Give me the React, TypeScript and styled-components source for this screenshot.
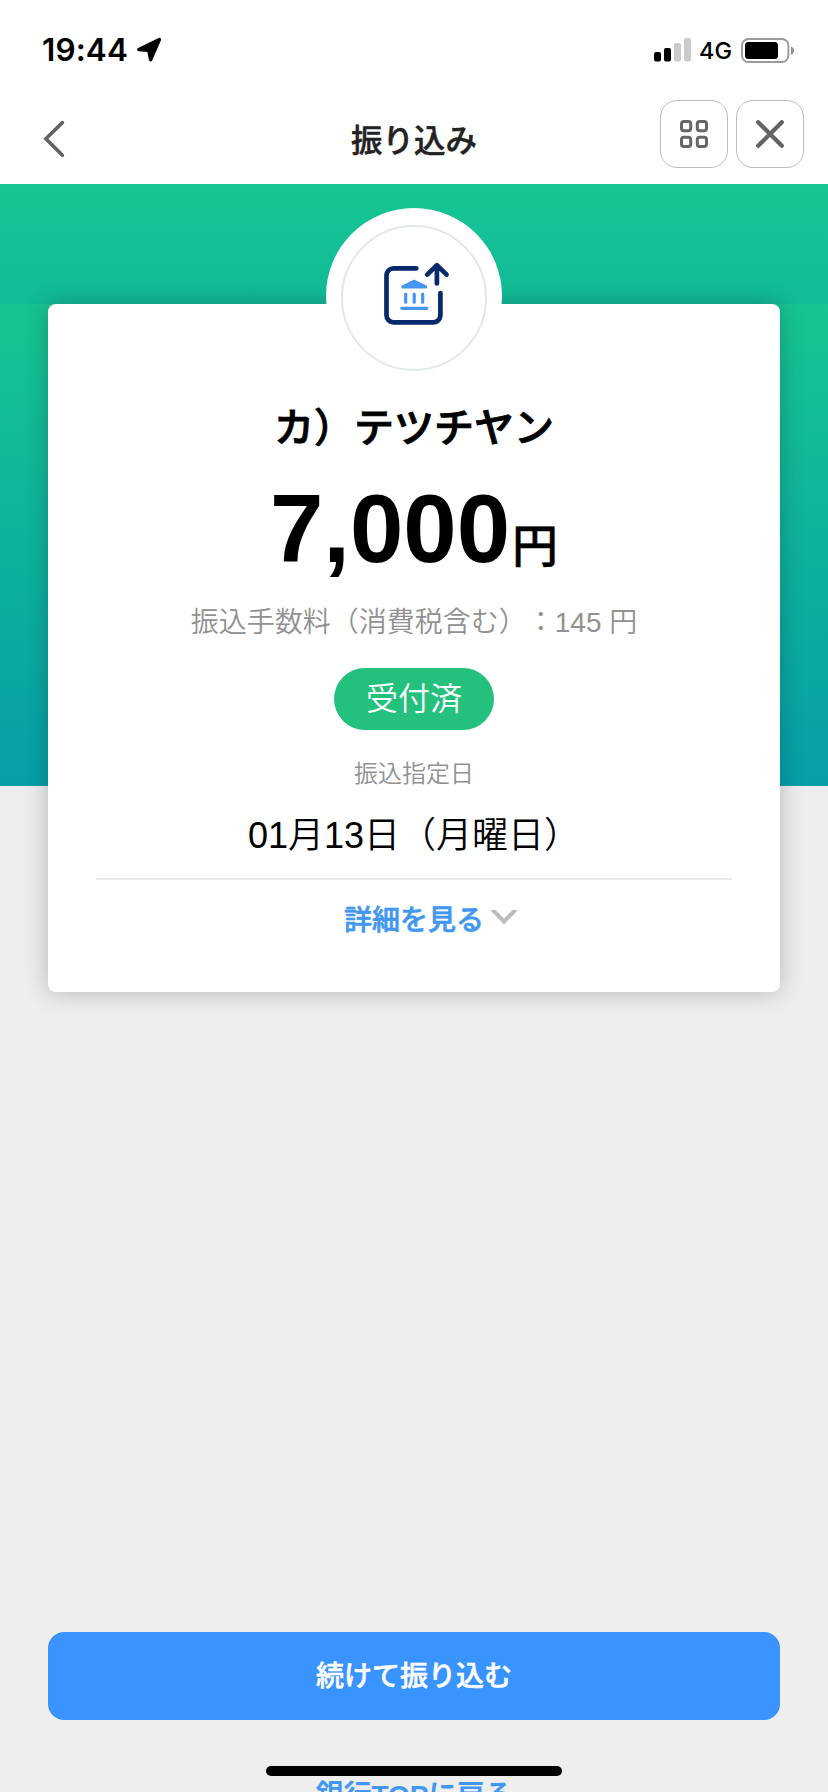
import React from "react";
import styled, { createGlobalStyle } from "styled-components";

const GlobalStyle = createGlobalStyle`
  *, *::before, *::after { box-sizing: border-box; }
  body {
    margin: 0;
    background: #eeeeee;
    font-family: "Liberation Sans", "Noto Sans CJK JP", sans-serif;
    text-spacing-trim: space-all;
    color: #000;
  }
  p, h1, h2 { margin: 0; }
  button { font-family: inherit; cursor: pointer; }
  svg { display: block; }
`;

const Screen = styled.div`
  width: 828px;
  height: 1792px;
  margin: 0 auto;
  display: flex;
  flex-direction: column;
  overflow: hidden;
  background: #eeeeee;
`;

const StatusBar = styled.div`
  flex: none;
  display: flex;
  justify-content: space-between;
  align-items: flex-start;
  height: 94px;
  padding: 34px 34px 0 42px;
  background: #fff;
  font-family: "Inter", sans-serif;
`;

const StatusGroup = styled.div`
  display: flex;
  align-items: center;
  height: 32px;
`;

const Clock = styled.span`
  width: 86px;
  margin-right: 8px;
  font-size: 31.5px;
  font-weight: 600;
  letter-spacing: 0.1px;
  line-height: 32px;
  white-space: nowrap;
`;

const Network = styled.span`
  width: 33px;
  margin: 1px 9px 0 8px;
  font-size: 23.5px;
  font-weight: 500;
  line-height: 32px;
`;

const NavBar = styled.header`
  flex: none;
  display: grid;
  grid-template-columns: 144px 1fr 144px;
  height: 90px;
  padding: 6px 24px 0;
  background: #fff;
`;

const BackButton = styled.button`
  width: 60px;
  height: 68px;
  padding: 10px 0 0 19px;
  border: 0;
  background: none;
`;

const PageTitle = styled.h1`
  text-align: center;
  font-size: 31.5px;
  font-weight: 500;
  line-height: 82px;
  color: #222;
  -webkit-text-stroke: 0.5px currentColor;
`;

const NavActions = styled.div`
  display: flex;
  gap: 8px;
`;

const SquareButton = styled.button`
  display: grid;
  place-items: center;
  width: 68px;
  height: 68px;
  padding: 0;
  border: 1px solid #bdbdbd;
  border-radius: 17px;
  background: #fff;
`;

const HeroBand = styled.div`
  flex: none;
  height: 120px;
  background: linear-gradient(#17c593, #11bb97);
`;

const Main = styled.main`
  flex: none;
  height: 1328px;
  padding: 0 48px;
  background: linear-gradient(#16c591, #069fa7) top / 100% 482px no-repeat;
`;

const Card = styled.section`
  display: flex;
  flex-direction: column;
  align-items: center;
  height: 688px;
  border-radius: 8px;
  background: #fff;
  box-shadow: 0 0 24px rgba(0, 0, 0, 0.24);
`;

const Medallion = styled.div`
  flex: none;
  display: grid;
  place-items: center;
  width: 176px;
  height: 176px;
  margin-top: -96px;
  padding-top: 4px;
  border-radius: 50%;
  background: #fff;
`;

const Ring = styled.div`
  display: grid;
  place-items: center;
  width: 146px;
  height: 146px;
  border: 2px solid #e2e8ea;
  border-radius: 50%;
`;

const Recipient = styled.h2`
  margin-top: 14px;
  font-size: 40px;
  font-weight: 500;
  line-height: 60px;
  -webkit-text-stroke: 0.9px currentColor;
`;

const Amount = styled.p`
  height: 110px;
  margin-top: 16px;
  font-size: 96px;
  font-weight: 700;
  line-height: 110px;
`;

const Unit = styled.span`
  margin-left: 2px;
  font-size: 46px;
  font-weight: 500;
  line-height: 1;
  -webkit-text-stroke: 0.4px currentColor;
`;

const Note = styled.p<{ $size: number; $height: number; $gap: number; $color?: string }>`
  margin-top: ${(p) => p.$gap}px;
  font-size: ${(p) => p.$size}px;
  font-weight: 350;
  line-height: ${(p) => p.$height}px;
  color: ${(p) => p.$color ?? "#919191"};
  white-space: nowrap;
`;

const Badge = styled.span`
  width: 160px;
  height: 62px;
  margin-top: 25px;
  border-radius: 31px;
  background: #24c07d;
  color: #fff;
  text-align: center;
  font-size: 32px;
  font-weight: 350;
  line-height: 63px;
`;

const Divider = styled.hr`
  width: 636px;
  height: 2px;
  margin: 17px 0 0;
  border: 0;
  background: #e9ebec;
`;

const DetailButton = styled.button`
  display: flex;
  align-items: center;
  gap: 6px;
  height: 40px;
  margin-top: 21px;
  padding: 0 0 0 34px;
  border: 0;
  background: none;
  color: #4297f2;
  font-size: 28px;
  font-weight: 500;
  line-height: 40px;
  -webkit-text-stroke: 0.6px currentColor;
`;

const Footer = styled.footer`
  position: relative;
  flex: none;
  height: 160px;
  padding: 0 48px;
`;

const PrimaryButton = styled.button`
  display: block;
  width: 100%;
  height: 88px;
  padding: 0;
  border: 0;
  border-radius: 16px;
  background: #3994ff;
  color: #fff;
  font-size: 28px;
  font-weight: 500;
  line-height: 89px;
  -webkit-text-stroke: 0.5px currentColor;
`;

const TextLink = styled.a`
  display: block;
  margin-top: 56px;
  text-align: center;
  font-size: 28px;
  font-weight: 600;
  line-height: 40px;
  color: #4297f2;
`;

const HomeIndicator = styled.div`
  position: absolute;
  top: 134px;
  left: 266px;
  width: 296px;
  height: 10px;
  border-radius: 5px;
  background: #000;
`;

const LocationIcon = () => (
  <svg width="26" height="26" viewBox="0 0 26 26">
    <path
      d="M23.4 2.6 14.6 22.8 13 14.2 12 13.3 2.8 12.6Z"
      fill="#000"
      stroke="#000"
      strokeWidth="3.4"
      strokeLinejoin="round"
    />
  </svg>
);

const SignalIcon = () => (
  <svg width="37" height="24" viewBox="0 0 37 24">
    <rect x="0" y="14" width="7" height="9.4" rx="2" />
    <rect x="10" y="10" width="7" height="13.4" rx="2" />
    <rect x="20" y="5" width="7" height="18.4" rx="2" fill="#cbcbcb" />
    <rect x="30" y="0" width="7" height="23.4" rx="2" fill="#cbcbcb" />
  </svg>
);

const BatteryIcon = () => (
  <svg width="53" height="25" viewBox="0 0 53 25">
    <rect x="1" y="1" width="46.4" height="23" rx="6.5" fill="none" stroke="#9a9a9a" strokeWidth="1.9" />
    <rect x="4" y="4" width="33" height="17" rx="3.5" />
    <path d="M50 8.5v8.2c2-.7 3-2.2 3-4.1s-1-3.4-3-4.1Z" fill="#8f8f8f" />
  </svg>
);

const BackIcon = () => (
  <svg width="22" height="38" viewBox="0 0 22 38" fill="none" stroke="#636363" strokeWidth="3.6" strokeLinecap="round">
    <path d="M19.4 2.6 2.9 18.8l16.5 16.4" />
  </svg>
);

const GridIcon = () => (
  <svg width="28" height="28" viewBox="0 0 28 28" fill="none" stroke="#666" strokeWidth="3">
    <rect x="1.5" y="1.5" width="9.2" height="9.2" rx="2.4" />
    <rect x="17.3" y="1.5" width="9.2" height="9.2" rx="2.4" />
    <rect x="1.5" y="17.3" width="9.2" height="9.2" rx="2.4" />
    <rect x="17.3" y="17.3" width="9.2" height="9.2" rx="2.4" />
  </svg>
);

const CloseIcon = () => (
  <svg width="28" height="28" viewBox="0 0 28 28" fill="none" stroke="#636363" strokeWidth="4.2" strokeLinecap="round">
    <path d="M2.2 2.2l23.6 23.6M25.8 2.2 2.2 25.8" />
  </svg>
);

const BankTransferIcon = () => (
  <svg width="72" height="72" viewBox="378 262 72 72" fill="none" strokeLinecap="round" strokeLinejoin="round">
    <g stroke="#06296b" strokeWidth="4.7">
      <path d="M416.3 268.4H393.5a7 7 0 0 0-7 7V315.3a7 7 0 0 0 7 7H433.4a7 7 0 0 0 7-7V293" />
      <path d="M436.9 283.4V265.6M427.2 274.6l9.7-9.3 9.7 9.3" />
    </g>
    <path d="M414.2 280.7 426 286.6v.9H402.4v-.9Z" fill="#4596f2" stroke="#4596f2" strokeWidth="2.2" />
    <g stroke="#4596f2" strokeWidth="3.2">
      <path d="M405.7 294v8.2M414.2 294v8.2M422.7 294v8.2" />
      <path d="M401.9 308.3h24.7" />
    </g>
  </svg>
);

const ChevronDown = () => (
  <svg width="28" height="15" viewBox="0 0 28 15">
    <path d="M0 0h5.6L14 8.6 22.4 0H28L14 14.6Z" fill="#bcbcbc" />
  </svg>
);

const ChevronSlot = styled.span`
  display: block;
  margin-top: -7px;
`;

export default function App() {
  return (
    <>
      <GlobalStyle />
      <Screen>
        <StatusBar>
          <StatusGroup>
            <Clock>19:44</Clock>
            <LocationIcon />
          </StatusGroup>
          <StatusGroup>
            <SignalIcon />
            <Network>4G</Network>
            <BatteryIcon />
          </StatusGroup>
        </StatusBar>
        <NavBar>
          <BackButton aria-label="戻る">
            <BackIcon />
          </BackButton>
          <PageTitle>振り込み</PageTitle>
          <NavActions>
            <SquareButton aria-label="メニュー">
              <GridIcon />
            </SquareButton>
            <SquareButton aria-label="閉じる">
              <CloseIcon />
            </SquareButton>
          </NavActions>
        </NavBar>
        <HeroBand />
        <Main>
          <Card>
            <Medallion>
              <Ring>
                <BankTransferIcon />
              </Ring>
            </Medallion>
            <Recipient>カ）テツチヤン</Recipient>
            <Amount>
              7,000<Unit>円</Unit>
            </Amount>
            <Note $size={28} $height={40} $gap={19}>
              振込手数料（消費税含む）：145 円
            </Note>
            <Badge>受付済</Badge>
            <Note $size={24} $height={36} $gap={26}>
              振込指定日
            </Note>
            <Note $size={36} $height={50} $gap={19} $color="#000">
              01月13日（月曜日）
            </Note>
            <Divider />
            <DetailButton>
              詳細を見る
              <ChevronSlot>
                <ChevronDown />
              </ChevronSlot>
            </DetailButton>
          </Card>
        </Main>
        <Footer>
          <PrimaryButton>続けて振り込む</PrimaryButton>
          <TextLink>銀行TOPに戻る</TextLink>
          <HomeIndicator />
        </Footer>
      </Screen>
    </>
  );
}
